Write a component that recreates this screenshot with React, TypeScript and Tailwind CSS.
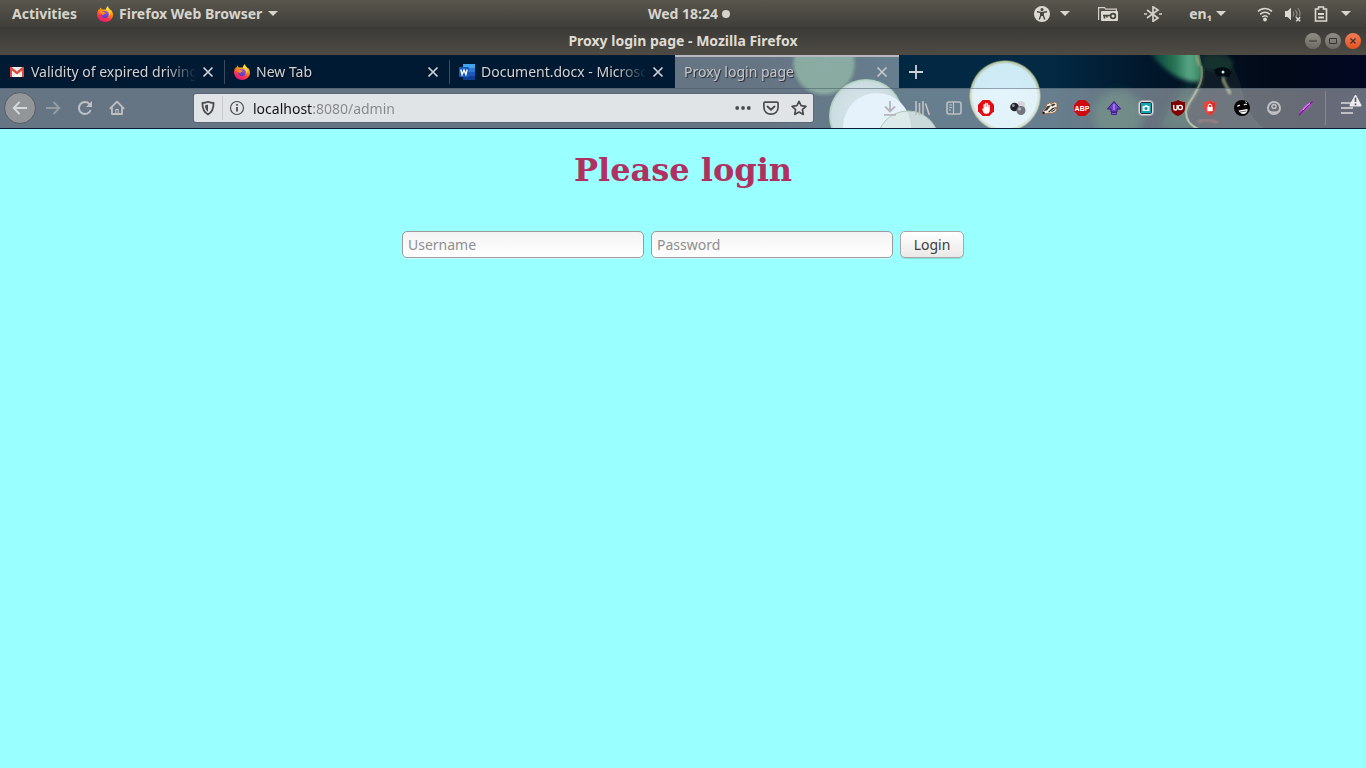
import type { ReactNode } from "react";

const UI = "font-['Noto_Sans','Open_Sans',sans-serif]";

function Svg({ children, size = 16, className = "" }: { children: ReactNode; size?: number; className?: string }) {
  return (
    <svg width={size} height={size} viewBox={`0 0 ${size} ${size}`} fill="none" className={`shrink-0 ${className}`} aria-hidden="true">
      {children}
    </svg>
  );
}

function Caret() {
  return (
    <svg width="10" height="5" viewBox="0 0 10 5" className="shrink-0" aria-hidden="true">
      <path d="M0 0h10L5 5z" fill="currentColor" />
    </svg>
  );
}

function FirefoxLogo({ id }: { id: string }) {
  return (
    <Svg>
      <defs>
        <linearGradient id={`${id}-body`} x1="12" y1="1" x2="5" y2="16" gradientUnits="userSpaceOnUse">
          <stop offset="0" stopColor="#fff44f" />
          <stop offset=".35" stopColor="#ff980e" />
          <stop offset=".68" stopColor="#ff3647" />
          <stop offset="1" stopColor="#e31587" />
        </linearGradient>
        <linearGradient id={`${id}-globe`} x1="9" y1="4" x2="6" y2="11" gradientUnits="userSpaceOnUse">
          <stop offset="0" stopColor="#9059ff" />
          <stop offset="1" stopColor="#5b3bc4" />
        </linearGradient>
      </defs>
      <path d="M8.6 3.800C9 2 10 .8 11 0c0 1.300.6 2 1.400 2.800.6.6 1.200 1.200 1.600 1.800l.2-.6C15.400 5.500 16 7.300 16 9c-.3 4-3.600 7-7.900 7C3.600 16 0 12.600 0 8.300 0 6.300.7 4.500 1.700 3.200l.2 1.200C2.300 3.300 3 2.300 3.900 1.600c0 .8.3 1.500.8 2 1.200-.3 2.800-.2 3.900.2z" fill={`url(#${id}-body)`} />
      <circle cx="8" cy="8.600" r="3.700" fill={`url(#${id}-globe)`} />
      <path d="M2.600 6.200c1.200-1.200 3-.9 4.200-.1.7.4 1.500.4 2 .6-.2.9-1.200 1.100-1.900 1.500-.6.400-.5.900-.2 1.200-1.500-.5-2.900-1.700-4.100-3.200z" fill="#ff8a16" />
      <path d="M9.200 3.300c1 .3 2.300 1.300 2.800 2.600.6 1.500.2 3.200-.4 4 2-1.300 2.300-4.300.9-6L10.900 2z" fill="#ffd93b" />
    </Svg>
  );
}

function GmailLogo() {
  return (
    <Svg>
      <path d="M1 3h14v10H1z" fill="#eceff1" />
      <path d="M3 13l5-5 5 5z" fill="#fafafa" />
      <path d="M3 13l4-4M13 13L9 9" stroke="#cfd3d6" strokeWidth=".7" />
      <path d="M1 3v10h2V6.500l5 3.900 5-3.900V13h2V3h-1.600L8 7.500 2.600 3z" fill="#db4a3c" />
    </Svg>
  );
}

function WordLogo() {
  return (
    <Svg>
      <path d="M4 0h12v4H4z" fill="#41a5ee" />
      <path d="M4 4h12v4H4z" fill="#2b7cd3" />
      <path d="M4 8h12v4H4z" fill="#185abd" />
      <path d="M4 12h12v4H4z" fill="#103f91" />
      <rect y="3" width="10" height="10" rx="1" fill="#185abd" />
      <path d="M1.800 5.500l1.300 5L5 6l1.900 4.500 1.300-5" stroke="#fff" strokeWidth="1.400" />
    </Svg>
  );
}

function CloseGlyph() {
  return (
    <Svg>
      <path d="M3.500 3.500l9 9M12.500 3.500l-9 9" stroke="currentColor" strokeWidth="1.700" />
    </Svg>
  );
}

function ActivityBar() {
  return (
    <header className={`grid h-[27px] grid-cols-[1fr_auto_1fr] items-center bg-linear-to-b from-[#59564e] to-[#3f3e39] text-sm font-bold text-[#d8d5cd] ${UI}`}>
      <div className="flex items-center gap-5 pl-3">
        <button type="button">Activities</button>
        <button type="button" className="flex items-center gap-1.5">
          <FirefoxLogo id="menu" />
          <span>Firefox Web Browser</span>
          <Caret />
        </button>
      </div>
      <button type="button" className="flex items-center gap-1 pl-3">
        Wed 18:24
        <span className="size-2 rounded-full bg-[#d5d2ca]" />
      </button>
      <div className="flex items-center justify-end pr-[15px]">
        <button type="button" aria-label="Accessibility" className="mr-7 flex items-center gap-2.5">
          <Svg>
            <circle cx="8" cy="8" r="8" fill="#dcd9d1" />
            <circle cx="8" cy="3.500" r="1.500" fill="#45433d" />
            <path d="M3 5.800l3.800.6v3L5.200 13.500M13 5.800l-3.800.6v3l1.600 4.100" stroke="#45433d" strokeWidth="1.400" />
            <path d="M6.600 6h2.800v4H6.600z" fill="#45433d" />
          </Svg>
          <Caret />
        </button>
        <button type="button" aria-label="Keyring" className="mr-[26px]">
          <svg width="20" height="16" viewBox="0 0 20 16" fill="none" aria-hidden="true">
            <path d="M.6 14V1.600h6l1 1.600h10.800v2" stroke="#d4d0c7" strokeWidth="1.200" />
            <rect x="3" y="5" width="17" height="10" rx="1" fill="#dcd9d1" />
            <circle cx="15" cy="10" r="2.400" stroke="#45433d" strokeWidth="1.700" />
            <path d="M5 9.500h8M6.500 10v2.500M9 10v1.500" stroke="#45433d" strokeWidth="1.700" />
          </svg>
        </button>
        <button type="button" aria-label="Bluetooth" className="mr-[27px]">
          <svg width="18" height="16" viewBox="0 0 18 16" fill="none" aria-hidden="true">
            <path d="M3 4l11 8-5 3.400V.8L14 4 3 12" stroke="#d4d1c9" strokeWidth="1.700" />
            <path d="M0 8h3M15 8h3" stroke="#d4d1c9" strokeWidth="1.700" />
          </svg>
        </button>
        <button type="button" className="mr-[31px] flex items-center gap-1">
          <span>en₁</span>
          <Caret />
        </button>
        <button type="button" aria-label="System menu" className="flex items-center gap-3">
          <Svg>
            <path d="M1 5.500c4-4 10-4 14 0M3.200 8.400c2.800-2.800 6.800-2.800 9.600 0M5.300 11c1.600-1.500 3.800-1.500 5.400 0" stroke="#dcd9d1" strokeWidth="1.500" />
            <circle cx="8" cy="13.500" r="1.900" fill="#dcd9d1" />
          </Svg>
          <Svg>
            <path d="M0 5h2.500L6 1.800v12.400L2.500 11H0z" fill="#dcd9d1" />
            <path d="M8 5.500c1 1.500 1 3.500 0 5M10.300 3.800c2 2.500 2 5.500.2 7.500M12.800 2c2.300 3 2.700 6 1.500 8.500" stroke="#8b887f" strokeWidth="1.200" />
            <path d="M11.200 11.200l4 4M15.200 11.200l-4 4" stroke="#dcd9d1" strokeWidth="1.600" />
          </Svg>
          <Svg>
            <path d="M5.500 1h5v2h3v12h-11V3h3z" stroke="#dcd9d1" strokeWidth="1.600" />
            <path d="M5 8h6M5 11.500h6" stroke="#dcd9d1" strokeWidth="2" />
          </Svg>
          <Caret />
        </button>
      </div>
    </header>
  );
}

function TitleBar() {
  return (
    <div className={`grid h-7 grid-cols-[1fr_auto_1fr] items-center bg-linear-to-b from-[#3b3a36] to-[#4e4b45] text-sm font-bold text-[#dfdbd2] ${UI}`}>
      <span />
      <span>Proxy login page - Mozilla Firefox</span>
      <div className="flex items-center justify-end gap-1 pr-[5px] text-[#35342f]">
        <button type="button" aria-label="Minimize" className="size-4 rounded-full bg-linear-to-b from-[#8f8d85] to-[#6c6a63]">
          <Svg><path d="M4 8h8" stroke="currentColor" /></Svg>
        </button>
        <button type="button" aria-label="Maximize" className="size-4 rounded-full bg-linear-to-b from-[#8f8d85] to-[#6c6a63]">
          <Svg><path d="M4.500 5.500h7v5h-7z" stroke="currentColor" /></Svg>
        </button>
        <button type="button" aria-label="Close window" className="size-4 rounded-full bg-linear-to-b from-[#f37c56] to-[#e4511c]">
          <Svg><path d="M5.500 5.500l5 5M10.500 5.500l-5 5" stroke="currentColor" strokeWidth="1.200" /></Svg>
        </button>
      </div>
    </div>
  );
}

/* Theme artwork: anchored to the right edge, as lightweight themes are. */
function ThemeArt() {
  return (
    <svg className="absolute top-0 right-0" width="600" height="74" viewBox="766 55 600 74" aria-hidden="true">
      <defs>
        <linearGradient id="sky" x1="766" x2="1366" gradientUnits="userSpaceOnUse">
          <stop offset="0" stopColor="#001a33" />
          <stop offset=".2" stopColor="#012843" />
          <stop offset=".48" stopColor="#032943" />
          <stop offset=".62" stopColor="#02182d" />
          <stop offset=".85" stopColor="#020a18" />
          <stop offset="1" stopColor="#020722" />
        </linearGradient>
        <linearGradient id="glow" x1="1152" x2="1202" gradientUnits="userSpaceOnUse">
          <stop offset="0" stopColor="#0b4038" />
          <stop offset=".45" stopColor="#287556" />
          <stop offset=".75" stopColor="#58a686" />
          <stop offset="1" stopColor="#35825f" />
        </linearGradient>
        <radialGradient id="moon">
          <stop offset="0" stopColor="#d3edfa" />
          <stop offset=".88" stopColor="#cdebf4" />
          <stop offset=".96" stopColor="#b4c2a0" />
          <stop offset="1" stopColor="#526a5a" stopOpacity=".5" />
        </radialGradient>
        <radialGradient id="orb">
          <stop offset="0" stopColor="#c5dae6" />
          <stop offset=".93" stopColor="#a9c6cd" />
          <stop offset="1" stopColor="#6cab80" />
        </radialGradient>
        <radialGradient id="haze">
          <stop offset="0" stopColor="#3e7468" />
          <stop offset=".85" stopColor="#3b7261" />
          <stop offset="1" stopColor="#3b7261" stopOpacity="0" />
        </radialGradient>
        <filter id="soft" x="-20%" y="-20%" width="140%" height="140%">
          <feGaussianBlur stdDeviation="1" />
        </filter>
        <filter id="blur" x="-30%" y="-30%" width="160%" height="160%">
          <feGaussianBlur stdDeviation="2" />
        </filter>
        <filter id="softer" x="-40%" y="-40%" width="180%" height="180%">
          <feGaussianBlur stdDeviation="4" />
        </filter>
      </defs>
      <rect x="766" y="55" width="600" height="74" fill="url(#sky)" />
      <circle cx="824" cy="64" r="33" fill="url(#haze)" />
      <circle cx="866" cy="116" r="37" fill="url(#orb)" />
      <circle cx="877" cy="127" r="34" fill="#d5e9f8" />
      <circle cx="908" cy="142" r="31" fill="#c4dad8" fillOpacity=".85" stroke="#75a485" />
      <circle cx="1005" cy="96" r="36" fill="url(#moon)" />
      <circle cx="1118" cy="115" r="25" fill="#14463e" filter="url(#softer)" opacity=".85" />
      <path d="M1190 80c-4 10-20 20-30 49h50z" fill="#0c3431" filter="url(#softer)" />
      <path d="M1148 50h52l4 20c-1 6-2 9-4 12-14 1-34-7-52-32z" fill="url(#glow)" filter="url(#blur)" />
      <path d="M1200 55c1 7 4 11 3 18 0 15-18 24-17 40 1 8 5 13 14 17h66c-12-8-22-25-26-48l-12-27z" fill="#0f1c28" />
      <path d="M1202 56c12-3 24-2 32 6l-8 16c-6-8-14-8-22-8z" fill="#16322f" filter="url(#blur)" />
      <path d="M1196 55c2 4 1 8 4 11" stroke="#8f9d72" strokeWidth="3" fill="none" filter="url(#soft)" />
      <path d="M1201 66c3 14-3 22-8 31-4 6-7 10-7 15 0 9 6 15 15 18" stroke="#8a9a74" strokeWidth="2" fill="none" />
      <path d="M1201 66c3 14-3 22-8 31-4 6-7 10-7 15" stroke="#61785f" strokeWidth="4" strokeOpacity=".5" fill="none" filter="url(#soft)" />
      <path d="M1214 70c4-4 14-4 18 2l-3 5-12-1z" fill="#020b12" />
      <path d="M1223 77c0 8 5 9 7 17" stroke="#8c966f" strokeWidth="3" fill="none" filter="url(#soft)" />
      <path d="M1198 122c7-4 14-2 20 1" stroke="#5b2a39" strokeWidth="3" fill="none" filter="url(#soft)" />
      <circle cx="1223" cy="72" r="1.500" fill="#c6efe6" />
    </svg>
  );
}

type TabInfo = { title: string; icon?: ReactNode; active?: boolean };

const tabs: TabInfo[] = [
  { title: "Validity of expired driving", icon: <GmailLogo /> },
  { title: "New Tab", icon: <FirefoxLogo id="tab" /> },
  { title: "Document.docx - Microsoft", icon: <WordLogo /> },
  { title: "Proxy login page", active: true },
];

function Tab({ title, icon, active }: TabInfo) {
  return (
    <div
      className={`flex h-full items-center pr-[9px] pl-[9px] ${
        active ? "w-56 bg-white/40 text-[#c6c6cb] shadow-[inset_0_2px_0_#b9b8be]" : "w-[225px] pr-2.5 text-[#d2d2d6]"
      }`}
    >
      <button type="button" role="tab" aria-selected={!!active} className="flex min-w-0 flex-1 items-center gap-1.5 text-left [text-shadow:1px_1px_1px_#000a]">
        {icon}
        <span className="min-w-0 flex-1 overflow-hidden mask-r-from-80% mask-r-to-98% whitespace-nowrap">{title}</span>
      </button>
      <button type="button" aria-label={`Close ${title}`}>
        <CloseGlyph />
      </button>
    </div>
  );
}

function TabStrip() {
  return (
    <div role="tablist" className="relative flex h-[33px] items-stretch text-sm">
      {tabs.map((tab, i) => (
        <div key={tab.title} className="flex items-center">
          <Tab {...tab} />
          {i < 2 && <span className="-ml-px h-6 w-px bg-[#3b4b5d]" />}
        </div>
      ))}
      <button type="button" aria-label="New tab" className="ml-[9px] text-[#d2d2d6]">
        <Svg><path d="M8 1v14M1 8h14" stroke="currentColor" strokeWidth="1.800" /></Svg>
      </button>
    </div>
  );
}

const gray = "#c0c0c4";

const extensions: { name: string; icon: ReactNode }[] = [
  {
    name: "Downloads",
    icon: <path d="M8 1v10M3 6.500l5 5 5-5M2 14.800h12" stroke="#b5b5ba" strokeWidth="1.800" />,
  },
  {
    name: "Library",
    icon: <path d="M2 1v14M5.500 3v12M9 1v14M11.500 3.500L15.300 15" stroke={gray} strokeWidth="1.600" />,
  },
  {
    name: "Sidebars",
    icon: (
      <>
        <rect x="1" y="2" width="14" height="12" rx="2" stroke={gray} strokeWidth="1.600" />
        <path d="M7.500 2v12M3 5h3M3 7.500h3M3 10h2" stroke={gray} strokeWidth="1.200" />
      </>
    ),
  },
  {
    name: "AdBlock",
    icon: (
      <>
        <path d="M4.700 0h6.600L16 4.700v6.600L11.300 16H4.700L0 11.300V4.700z" fill="#e40b12" />
        <path d="M4 8.500l1.500.5V4.500q.7-1 1.300 0V7h.3V3q.8-1 1.400 0v4h.4V3.500q.7-.8 1.300 0v4h.3V5q.8-.7 1.300.2v5c0 2.300-1.500 3.600-3.500 3.600-2.500 0-3-1.200-4.300-5.300z" fill="#fff" />
      </>
    ),
  },
  {
    name: "Containers",
    icon: (
      <>
        <circle cx="11" cy="5" r="4" fill="#d3d5da" />
        <circle cx="4.500" cy="7" r="4.300" fill="#23242a" />
        <circle cx="11" cy="10.500" r="4.500" fill="#73757c" />
        <circle cx="3.300" cy="5.500" r="1.500" fill="#8c8e95" />
        <circle cx="9.600" cy="9" r="1.500" fill="#b9bbc1" />
      </>
    ),
  },
  {
    name: "Privacy Badger",
    icon: (
      <>
        <path d="M.5 13.500l.5-3 3-3.500.5-2.500 3-1.500 2 .5 3-1.500 2.500 1.500v3l-1 1.500 1 1-1.500 3-4 1.500-3-.5-4 1z" fill="#f7efe4" stroke="#9b6130" strokeWidth=".8" />
        <path d="M1.500 11l4-5 3.500-.5-4 5zM8.500 5l3.500-1.500 1.500 1-3 2z" fill="#3a3a3a" />
        <path d="M6 12l4.500-4 3.500-.8-1 3-3.500 2z" fill="#202020" />
        <path d="M8 12l5-3.500" stroke="#fff" strokeWidth=".9" />
        <path d="M.3 12l2-.5.7 2-2 .5z" fill="#111" />
      </>
    ),
  },
  {
    name: "Adblock Plus",
    icon: (
      <>
        <path d="M4.700 0h6.600L16 4.700v6.600L11.300 16H4.700L0 11.300V4.700z" fill="#cc0a10" />
        <text x="8" y="10.700" textAnchor="middle" fontFamily="Liberation Sans Narrow, Liberation Sans, sans-serif" fontWeight="700" fontSize="7" fill="#fff">ABP</text>
      </>
    ),
  },
  {
    name: "Upload helper",
    icon: (
      <>
        <path d="M8 1.500l6.500 7.500H11v3H5V9H1.500z" fill="#7041c9" stroke="#36137e" />
        <path d="M5.500 12.500h5v2h-5z" fill="#865be0" stroke="#36137e" strokeWidth=".8" />
        <path d="M8 4v6" stroke="#a98aee" strokeWidth="1.500" />
      </>
    ),
  },
  {
    name: "Screenshot tool",
    icon: (
      <>
        <rect x=".8" y=".8" width="14.400" height="14.400" rx="3" fill="#eceeef" stroke="#aeb2b5" />
        <rect x="2.500" y="2.500" width="11" height="11" rx="1" fill="#16a3b2" stroke="#222e35" />
        <path d="M4.500 6h2l.6-1h2l.6 1h1.800v5h-7z" fill="#e5fbff" />
        <circle cx="8" cy="8.400" r="1.500" fill="#168b9b" />
      </>
    ),
  },
  {
    name: "uBlock Origin",
    icon: (
      <>
        <path d="M8 0c2.500 1.500 4.500 2 7 2v6c0 4-3 6.500-7 8-4-1.500-7-4-7-8V2c2.500 0 4.500-.5 7-2z" fill="#800000" />
        <path d="M3.700 5v3.200q0 1.800 1.700 1.800t1.700-1.500V5" stroke="#fff" strokeWidth="1.400" />
        <circle cx="10.300" cy="7.500" r="2.100" stroke="#fff" strokeWidth="1.400" />
      </>
    ),
  },
  {
    name: "Secure connection",
    icon: (
      <>
        <path d="M8 0c2 1.800 4 2.300 6.500 2.300 0 6-1.500 10.700-6.500 13.700-5-3-6.500-7.700-6.500-13.700C4 2.300 6 1.800 8 0z" fill="#e8443a" />
        <path d="M8 1.500v13c3.900-2.500 5.200-6 5.300-11.200C11.300 3.200 9.500 2.700 8 1.500z" fill="#d42f2c" />
        <rect x="5.300" y="7" width="5.400" height="4.200" fill="#fff" />
        <path d="M6.300 7V5.700q0-1.500 1.700-1.500t1.700 1.500V7" stroke="#fff" />
      </>
    ),
  },
  {
    name: "Grinning face",
    icon: (
      <>
        <circle cx="8" cy="8" r="8" fill="#050505" />
        <path d="M4.500 10.500l9-1.500c.3 3-1.500 4.700-4 4.900-2.300.1-4-1.400-5-3.400z" fill="#fff" />
        <path d="M3.500 6.500q.8-1.500 2.500-1M10 5q1-1.200 2.800-.5" stroke="#fff" strokeWidth="1.200" />
        <path d="M6 12l6.500-1" stroke="#222" strokeWidth=".7" />
        <path d="M11 1.500l2 1.500" stroke="#bbb" />
      </>
    ),
  },
  {
    name: "Account",
    icon: (
      <>
        <circle cx="8" cy="8" r="6" stroke={gray} strokeWidth="2" />
        <circle cx="8" cy="6.500" r="2" stroke={gray} strokeWidth="1.500" />
        <path d="M3.500 10.500c2.500 1.300 6.500 1.300 9 0v2.500h-9z" fill={gray} />
      </>
    ),
  },
  {
    name: "Feather notes",
    icon: (
      <>
        <path d="M1 15C2.500 9 8 4 15 .5c-.5 2-1.500 3-2.500 4 .5 0 .8 0 1.200-.3C11 9 6 11.500 1 15z" fill="#ba58d6" />
        <path d="M1 15L14.500 1.500" stroke="#7d139b" strokeWidth="1.200" />
        <path d="M5 10c2-3 4.500-5 7-6.500" stroke="#e3a8f0" />
      </>
    ),
  },
];

function NavToolbar() {
  return (
    <div className="relative flex h-10 items-center bg-white/40 pl-1 shadow-[inset_0_1px_0_#44546480]">
      <button type="button" aria-label="Back" className="grid size-8 place-items-center rounded-full border border-[#565d66] bg-[#939699]">
        <Svg><path d="M15 8H2M7.500 2L1.700 8l5.800 6" stroke="#d8d8da" strokeWidth="1.800" /></Svg>
      </button>
      <button type="button" aria-label="Forward" className="grid w-[34px] place-items-center">
        <Svg><path d="M1 8h13M8.500 2l5.800 6-5.800 6" stroke="#969ca4" strokeWidth="1.800" /></Svg>
      </button>
      <button type="button" aria-label="Reload" className="grid w-[30px] place-items-center">
        <Svg>
          <path d="M12.800 4.500A6 6 0 1 0 13.600 10" stroke={gray} strokeWidth="2" />
          <path d="M15 1v6H9z" fill={gray} />
        </Svg>
      </button>
      <button type="button" aria-label="Home" className="grid w-[33px] place-items-center">
        <Svg>
          <path d="M.8 8.800L8 1.700l7.200 7.100M3 7.500V14h10V7.500" stroke={gray} strokeWidth="1.800" strokeLinejoin="round" />
          <path d="M6.300 14V9h3.400v5z" fill={gray} />
          <path d="M7.300 10h1.400v3H7.300z" fill="#6b7885" />
        </Svg>
      </button>
      <div className="mx-[61px] flex h-7 min-w-0 flex-1 items-center rounded-xs bg-[#e1e4e7] pr-1.5 pl-1.5 text-[#4c4c50] shadow-[0_0_0_1px_#4d596780]">
        <Svg>
          <path d="M8 1.800c2 .9 3.800 1.200 5.600 1.200 0 5.500-1.300 9.200-5.600 11.500C3.700 12.200 2.400 8.500 2.400 3 4.200 3 6 2.700 8 1.800z" stroke="currentColor" strokeWidth="1.800" strokeLinejoin="round" />
          <path d="M8 4.500v7.300C5.800 10.200 5 8.200 5 5.200c1 0 2-.2 3-.7z" fill="currentColor" />
        </Svg>
        <span className="mr-1.5 ml-1.5 h-6 w-px bg-[#cacac8]" />
        <Svg>
          <circle cx="8" cy="8" r="6.500" stroke="currentColor" strokeWidth="1.200" />
          <path d="M8 7v4.500M8 4v1.800" stroke="currentColor" strokeWidth="1.800" />
        </Svg>
        <input
          type="text"
          aria-label="Address"
          defaultValue="localhost:8080/admin"
          className="ml-2 h-full min-w-0 flex-1 bg-[linear-gradient(90deg,#111_60px,#85878a_60px)] bg-clip-text text-sm text-transparent caret-black outline-none"
        />
        <button type="button" aria-label="Page actions" className="mr-3">
          <Svg>
            <circle cx="2.200" cy="8" r="1.900" fill="currentColor" />
            <circle cx="8" cy="8" r="1.900" fill="currentColor" />
            <circle cx="13.800" cy="8" r="1.900" fill="currentColor" />
          </Svg>
        </button>
        <button type="button" aria-label="Save to Pocket" className="mr-3">
          <Svg>
            <path d="M2 2.200h12q1.100 0 1.100 1.100v4C15.100 11.500 12 14.200 8 14.200S.9 11.500.9 7.300v-4Q.9 2.200 2 2.200z" stroke="currentColor" strokeWidth="1.700" />
            <path d="M4.500 6.500L8 9.800l3.500-3.300" stroke="currentColor" strokeWidth="1.900" strokeLinecap="round" />
          </Svg>
        </button>
        <button type="button" aria-label="Bookmark this page">
          <Svg><path d="M8 1.300l2.100 4.400 4.800.6-3.500 3.300.9 4.800L8 12.100l-4.300 2.300.9-4.800L1.100 6.300l4.800-.6z" stroke="currentColor" strokeWidth="1.700" strokeLinejoin="round" /></Svg>
        </button>
      </div>
      {extensions.map(({ name, icon }) => (
        <button key={name} type="button" aria-label={name} className="grid w-8 shrink-0 place-items-center">
          <Svg>{icon}</Svg>
        </button>
      ))}
      <span className="ml-[3px] h-[34px] w-px bg-[#a4a4b080]" />
      <button type="button" aria-label="Open menu" className="mr-1 ml-3.5 self-start pt-1">
        <svg width="22" height="26" viewBox="0 0 22 26" fill="none" aria-hidden="true">
          <path d="M1 11h12M1 16h12M1 21h12" stroke={gray} strokeWidth="2" />
          <path d="M15.500 4L20.500 13.500H10.500z" fill="#ececee" stroke="#ececee" strokeWidth="2" strokeLinejoin="round" />
          <path d="M15.500 5.500v4.500M15.500 11.500v1.800" stroke="#5b5a6a" strokeWidth="1.700" />
        </svg>
      </button>
    </div>
  );
}

const field =
  "h-[27px] w-[242px] rounded-[5px] border border-[#9b9b9b] bg-linear-to-b from-[#f3f3f3] to-white px-[5px] text-sm text-[#3c3c3c] shadow-[0_1px_0_#ffffff80] outline-none placeholder:text-[#8f8f8f]";

function LoginPage() {
  return (
    <main className="flex flex-1 flex-col items-center bg-[#99ffff] pt-[21px]">
      <h1 className="text-[32px] leading-10 font-bold text-[#b03060] font-['DejaVu_Serif',serif]">Please login</h1>
      <form className={`mt-[41px] flex flex-wrap justify-center gap-[7px] ${UI}`} onSubmit={(e) => e.preventDefault()}>
        <input type="text" aria-label="Username" placeholder="Username" className={field} />
        <input type="password" aria-label="Password" placeholder="Password" className={field} />
        <button type="submit" className="h-[27px] w-16 rounded-[5px] border border-[#a9a5a2] bg-linear-to-b from-white to-[#ebe9e8] text-sm text-[#3c3c3c] shadow-[0_1px_0_#00000020]">
          Login
        </button>
      </form>
    </main>
  );
}

export default function App() {
  return (
    <div className="flex min-h-screen flex-col">
      <ActivityBar />
      <TitleBar />
      <div className={`relative overflow-hidden border-b border-[#061f35] bg-[#001a33] ${UI}`}>
        <ThemeArt />
        <TabStrip />
        <NavToolbar />
      </div>
      <LoginPage />
    </div>
  );
}
